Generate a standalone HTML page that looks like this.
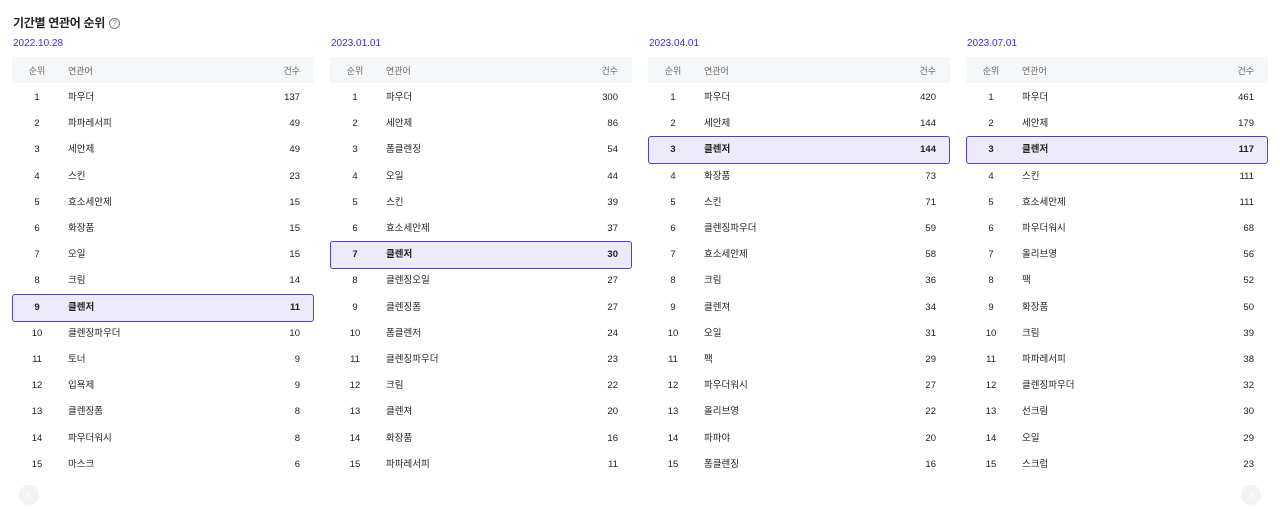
<!DOCTYPE html>
<html><head><meta charset="utf-8"><style>
*{margin:0;padding:0;box-sizing:border-box}
body{width:1280px;height:509px;background:#fff;font-family:"Liberation Sans","Noto Sans CJK KR",sans-serif;color:#222;position:relative;overflow:hidden}
.title{position:absolute;left:13px;top:14px;font-size:12px;font-weight:bold;color:#222;letter-spacing:-0.3px}
.q{display:inline-block;width:11px;height:11px;border:1px solid #777;border-radius:50%;font-size:8px;text-align:center;line-height:9px;color:#777;font-weight:normal;margin-left:4px;vertical-align:1px}
.col{position:absolute;top:0;width:302px;height:509px}
.date{position:absolute;left:1px;top:38px;font-size:10px;color:#3d2fd6}
.hd{position:absolute;left:0;top:57px;width:302px;height:26px;background:#f6f7f9;font-size:9px;color:#666}
.r{position:absolute;left:0;width:302px;height:26px;font-size:9.5px}
.r span{position:absolute;top:1px;line-height:26px}
.hd span{position:absolute;top:1px;line-height:26px}
.a{left:13px;width:24px;text-align:center}
.b{left:56px}
.c{right:14px;text-align:right}
.hl{background:#edeafb;border:1px solid #4c3fd0;border-radius:3px;height:28px;font-weight:bold}
.hl span{top:0px}
.nav{position:absolute;top:485px;width:20px;height:20px;border-radius:50%;background:#f2f2f2;color:#fff;font-size:12px;text-align:center;line-height:20px;font-weight:bold}
</style></head><body>
<div class="title">기간별 연관어 순위<span class="q">?</span></div>
<div id="wrap"></div>
<div class="nav" style="left:19px">‹</div>
<div class="nav" style="left:1241px">›</div>
<script>
var data=[
[12,"2022.10.28",9,[["파우더",137],["파파레서피",49],["세안제",49],["스킨",23],["효소세안제",15],["화장품",15],["오일",15],["크림",14],["클렌저",11],["클렌징파우더",10],["토너",9],["입욕제",9],["클렌징폼",8],["파우더워시",8],["마스크",6]]],
[330,"2023.01.01",7,[["파우더",300],["세안제",86],["폼클렌징",54],["오일",44],["스킨",39],["효소세안제",37],["클렌저",30],["클렌징오일",27],["클렌징폼",27],["폼클렌저",24],["클렌징파우더",23],["크림",22],["클렌져",20],["화장품",16],["파파레서피",11]]],
[648,"2023.04.01",3,[["파우더",420],["세안제",144],["클렌저",144],["화장품",73],["스킨",71],["클렌징파우더",59],["효소세안제",58],["크림",36],["클렌져",34],["오일",31],["팩",29],["파우더워시",27],["올리브영",22],["파파야",20],["폼클렌징",16]]],
[966,"2023.07.01",3,[["파우더",461],["세안제",179],["클렌저",117],["스킨",111],["효소세안제",111],["파우더워시",68],["올리브영",56],["팩",52],["화장품",50],["크림",39],["파파레서피",38],["클렌징파우더",32],["선크림",30],["오일",29],["스크럽",23]]]];
var h="";
data.forEach(function(d){
h+='<div class="col" style="left:'+d[0]+'px"><div class="date">'+d[1]+'</div><div class="hd"><span class="a">순위</span><span class="b">연관어</span><span class="c">건수</span></div>';
d[3].forEach(function(r,i){
var t=Math.round(84+26.2*i), hl=(i+1==d[2]);
h+='<div class="r'+(hl?' hl':'')+'" style="top:'+t+'px"><span class="a"'+(hl?' style="left:12px"':'')+'>'+(i+1)+'</span><span class="b"'+(hl?' style="left:55px"':'')+'>'+r[0]+'</span><span class="c"'+(hl?' style="right:13px"':'')+'>'+r[1]+'</span></div>';
});
h+='</div>';
});
document.getElementById("wrap").innerHTML=h;
</script>
</body></html>
